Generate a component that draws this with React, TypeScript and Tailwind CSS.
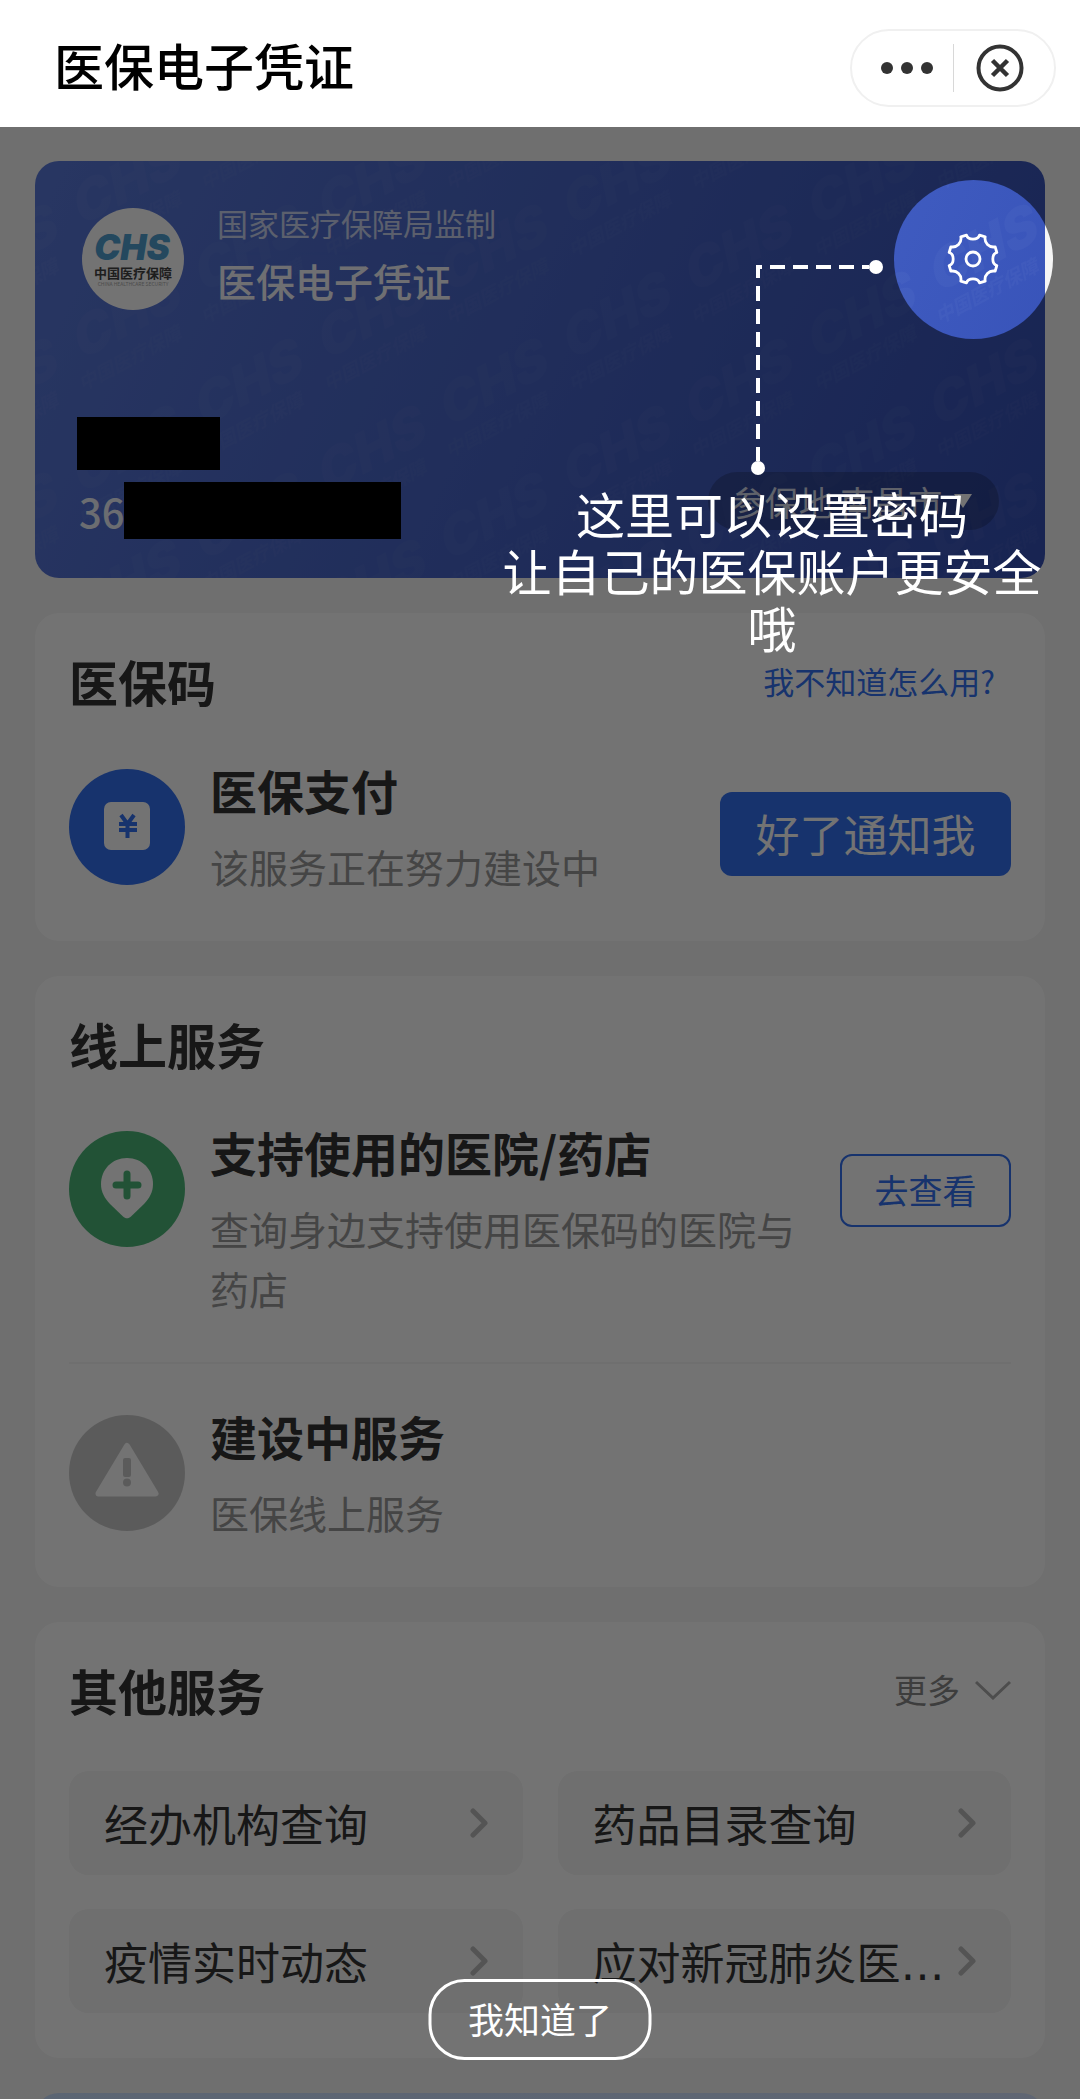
import { useState } from 'react';
import type { ReactNode } from 'react';

const services = [
  { label: '经办机构查询' },
  { label: '药品目录查询' },
  { label: '疫情实时动态' },
  { label: '应对新冠肺炎医', clipped: true },
];

function ChsLogo() {
  return (
    <div className="flex size-[102px] flex-col items-center justify-center rounded-full bg-white">
      <svg viewBox="0 -10 80 66" className="w-20 overflow-visible" role="img" aria-label="CHS 中国医疗保障">
        <text x="39" y="24" textAnchor="middle" fontSize="35" fontWeight="900" fontStyle="italic" fontFamily="Inter, sans-serif" fill="#50a0d0">CHS</text>
        <text x="40" y="42" textAnchor="middle" fontSize="13" fontWeight="700" fill="#444">中国医疗保障</text>
        <text x="40" y="50" textAnchor="middle" fontSize="5" fill="#aaa">CHINA HEALTHCARE SECURITY</text>
      </svg>
    </div>
  );
}

function Watermark() {
  return (
    <svg className="absolute inset-0 size-full" aria-hidden="true">
      <defs>
        <g id="chs-mark" transform="rotate(-28) skewX(-16)" fill="#fff">
          <text x="0" y="0" fontSize="54" fontWeight="900" fontFamily="Inter, sans-serif">CHS</text>
          <text x="-4" y="28" fontSize="19" fontWeight="700">中国医疗保障</text>
        </g>
        <pattern id="chs-pattern" width="245" height="134" patternUnits="userSpaceOnUse">
          <use href="#chs-mark" x="45" y="66" />
          <use href="#chs-mark" x="45" y="200" />
          <use href="#chs-mark" x="-200" y="66" />
          <use href="#chs-mark" x="167" y="133" />
          <use href="#chs-mark" x="167" y="-1" />
          <use href="#chs-mark" x="-78" y="133" />
          <use href="#chs-mark" x="-78" y="-1" />
        </pattern>
      </defs>
      <rect width="100%" height="100%" fill="url(#chs-pattern)" opacity="0.028" />
    </svg>
  );
}

function GearIcon() {
  return (
    <svg viewBox="0 0 52 52" className="size-[52px]" fill="none" stroke="#fff" strokeWidth="2.8" strokeLinejoin="round">
      <path d="M19.500 2.200C21 7.500 31 7.500 32.500 2.200L38.200 3.800C37 10 42 15 48.200 13.800L49.800 19.500C44.500 21 44.500 31 49.800 32.500L48.200 38.200C42 37 37 42 38.200 48.200L32.500 49.800C31 44.500 21 44.500 19.500 49.800L13.800 48.200C15 42 10 37 3.800 38.200L2.200 32.500C7.500 31 7.500 21 2.200 19.500L3.800 13.800C10 15 15 10 13.800 3.800Z" />
      <circle cx="26" cy="26" r="7" />
    </svg>
  );
}

function PayIcon() {
  return (
    <svg viewBox="0 0 116 116" className="size-[116px] shrink-0" aria-hidden="true">
      <circle cx="58" cy="58" r="58" fill="#3371f2" />
      <rect x="35" y="33" width="46" height="48" rx="7" fill="#fff" />
      <path d="M52 46l6.500 9 6.500-9M58.500 55v14M50 55h18M50 61h18" fill="none" stroke="#3371f2" strokeWidth="4" />
    </svg>
  );
}

function HospitalIcon() {
  return (
    <svg viewBox="0 0 116 116" className="size-[116px] shrink-0" aria-hidden="true">
      <circle cx="58" cy="58" r="58" fill="#4cb778" />
      <path d="M58 27c-15 0-26 11.500-26 26 0 8 3.500 14 9 20l13 12.500c2.500 2.400 5.500 2.400 8 0L75 73c5.500-6 9-12 9-20 0-14.500-11-26-26-26z" fill="#fff" />
      <path d="M58 43v22M47 54h22" fill="none" stroke="#4cb778" strokeWidth="7" strokeLinecap="round" />
    </svg>
  );
}

function WarnIcon() {
  return (
    <svg viewBox="0 0 116 116" className="size-[116px] shrink-0" aria-hidden="true">
      <circle cx="58" cy="58" r="58" fill="#cbcbcb" />
      <path d="M58 31L86.500 78.500H29.500z" fill="#fff" stroke="#fff" strokeWidth="6" strokeLinejoin="round" />
      <rect x="54" y="43" width="8" height="19" rx="2" fill="#cbcbcb" />
      <circle cx="58" cy="67.500" r="4" fill="#cbcbcb" />
    </svg>
  );
}

function Card({ title, extra, children, className = '' }: { title: string; extra?: ReactNode; children: ReactNode; className?: string }) {
  return (
    <section className={`rounded-[24px] bg-white px-[34px] pt-8 ${className}`}>
      <div className="mb-[45px] flex h-[72px] items-center justify-between">
        <h2 className="text-[49px] font-bold">{title}</h2>
        {extra}
      </div>
      {children}
    </section>
  );
}

function ServiceItem({ icon, title, desc, action }: { icon: ReactNode; title: string; desc: string; action?: ReactNode }) {
  return (
    <div className="flex items-start">
      {icon}
      <div className="-mt-[3px] mb-[3px] ml-[25px] flex-1">
        <h3 className="text-[47px] leading-[48px] font-bold whitespace-nowrap">{title}</h3>
        <p className="mt-[22px] text-[39px] leading-[60px] text-[#999]">{desc}</p>
      </div>
      {action}
    </div>
  );
}

export default function App() {
  const [guide, setGuide] = useState(true);

  return (
    <div lang="zh-CN" className="flex h-screen flex-col overflow-hidden bg-[#f5f5f5] font-['Noto_Sans_CJK_SC',sans-serif] text-[#333]">
      <header className="flex h-[127px] shrink-0 items-center justify-between bg-white pt-[9px] pr-6 pl-[54px]">
        <h1 className="pb-[7px] text-[50px] font-medium text-black">医保电子凭证</h1>
        <div className="flex h-[78px] w-[206px] items-center rounded-full border-2 border-[#f0f0f0]">
          <button aria-label="更多操作" className="flex h-full flex-1 items-center justify-center gap-2 pl-2">
            <span className="size-3 rounded-full bg-[#333]" />
            <span className="size-3 rounded-full bg-[#333]" />
            <span className="size-3 rounded-full bg-[#333]" />
          </button>
          <span className="h-[48px] w-px bg-[#d8d8d8]" />
          <button aria-label="关闭" className="flex h-full w-[100px] items-center justify-center pr-2">
            <svg viewBox="0 0 48 48" className="size-12" fill="none" stroke="#333">
              <circle cx="24" cy="24" r="21.500" strokeWidth="4" />
              <path d="M16.500 16.500l15 15M31.500 16.500l-15 15" strokeWidth="4.500" />
            </svg>
          </button>
        </div>
      </header>

      <main className="relative flex min-h-0 flex-1 flex-col gap-[35px] overflow-hidden px-[35px] pt-[34px] *:shrink-0">
        <section className="relative flex h-[417px] flex-col justify-between overflow-hidden rounded-[24px] bg-linear-[115deg] from-[#5a79da] to-[#3550b6] text-white">
          <Watermark />
          <div className="relative flex items-start pt-[47px] pr-[46px] pl-[47px]">
            <ChsLogo />
            <div className="-mt-[2px] ml-[33px] flex-1">
              <p className="text-[31px] leading-[34px] opacity-70">国家医疗保障局监制</p>
              <p className="mt-3 text-[39px] leading-[56px] font-medium opacity-95">医保电子凭证</p>
            </div>
            <button aria-label="设置" className="mt-[25px]">
              <GearIcon />
            </button>
          </div>
          <div className="relative flex items-end justify-between pr-[46px] pb-[39px] pl-[42px]">
            <div className="flex flex-col gap-3">
              <span className="h-[53px] w-[143px] bg-black" />
              <div className="flex h-[57px] items-center">
                <span className="w-[47px] pl-[2px] text-[40px] font-medium opacity-90">36</span>
                <span className="h-full w-[277px] bg-black" />
              </div>
            </div>
            <button className="mb-[9px] flex h-[58px] w-[291px] items-center justify-center gap-3 rounded-full bg-black/20 pr-1 text-[34px]">
              <span className="opacity-80">参保地 南昌市</span>
              <svg viewBox="0 0 18 14" className="w-[18px]" fill="#fff"><path d="M0 0h18L9 14z" /></svg>
            </button>
          </div>
        </section>

        <Card
          title="医保码"
          className="pb-[42px]"
          extra={<a href="#help" className="pr-4 text-[31px] text-[#3371f2]">我不知道怎么用?</a>}
        >
          <div className="pt-[7px]">
            <ServiceItem
              icon={<PayIcon />}
              title="医保支付"
              desc="该服务正在努力建设中"
              action={<button className="mt-[23px] h-[84px] w-[291px] rounded-xl bg-[#3371f2] pb-[2px] text-[44px] leading-none text-white">好了通知我</button>}
            />
          </div>
        </Card>

        <Card title="线上服务" className="pb-[42px]">
          <div className="pt-[6px]">
            <ServiceItem
              icon={<HospitalIcon />}
              title="支持使用的医院/药店"
              desc="查询身边支持使用医保码的医院与药店"
              action={<button className="mt-[23px] ml-5 h-[73px] w-[171px] rounded-xl border-2 border-[#3371f2] pb-[2px] text-[34px] leading-none text-[#3371f2]">去查看</button>}
            />
          </div>
          <hr className="mt-[41px] mb-[51px] border-t-2 border-[#f5f5f5]" />
          <ServiceItem icon={<WarnIcon />} title="建设中服务" desc="医保线上服务" />
        </Card>

        <Card
          title="其他服务"
          className="pb-[45px]"
          extra={
            <button className="flex items-center gap-[15px] text-[33px] text-[#888]">
              更多
              <svg viewBox="0 0 36 20" className="w-9" fill="none" stroke="#aaa" strokeWidth="3"><path d="M1 2l17 16L35 2" /></svg>
            </button>
          }
        >
          <div className="grid grid-cols-2 gap-x-[35px] gap-y-[34px]">
            {services.map((s) => (
              <button key={s.label} className="flex h-[104px] items-center justify-between rounded-[20px] bg-[#f5f5f5] px-[35px] text-[44px]">
                <span className="whitespace-nowrap">
                  {s.label}
                  {s.clipped && <span className="font-['DejaVu_Sans',sans-serif] leading-none">…</span>}
                </span>
                <svg viewBox="0 0 18 30" className="w-[18px] shrink-0" fill="none" stroke="#bbb" strokeWidth="5" strokeLinecap="round" strokeLinejoin="round"><path d="M3 3l12 12L3 27" /></svg>
              </button>
            ))}
          </div>
        </Card>

        <div className="h-[180px] rounded-[24px] bg-linear-to-r from-[#cbe0ff] to-[#d4e3ff]" />

        {guide && (
          <div className="absolute inset-0 text-white">
            <div className="absolute top-[53px] right-[27px] size-[159px] rounded-full shadow-[0_0_0_3000px_rgba(0,0,0,0.55)]" />
            <svg viewBox="0 0 134 220" className="absolute top-[130px] right-[197px] w-[134px]" fill="none" stroke="#fff" strokeWidth="4">
              <path d="M9 10V204" strokeDasharray="15 8" strokeDashoffset="4" />
              <path d="M7 10H120" strokeDasharray="15 8" strokeDashoffset="9" />
              <circle cx="127" cy="10" r="7" fill="#fff" stroke="none" />
              <circle cx="9" cy="211" r="7" fill="#fff" stroke="none" />
            </svg>
            <p className="absolute top-[357px] right-[34px] w-[548px] text-center text-[49px] leading-[57px]">
              这里可以设置密码
              <br />
              让自己的医保账户更安全哦
            </p>
            <button
              onClick={() => setGuide(false)}
              className="absolute bottom-[39px] left-1/2 h-[81px] w-[223px] -translate-x-1/2 rounded-[36px] border-3 border-white pb-1 text-[36px] leading-none"
            >
              我知道了
            </button>
          </div>
        )}
      </main>
    </div>
  );
}
